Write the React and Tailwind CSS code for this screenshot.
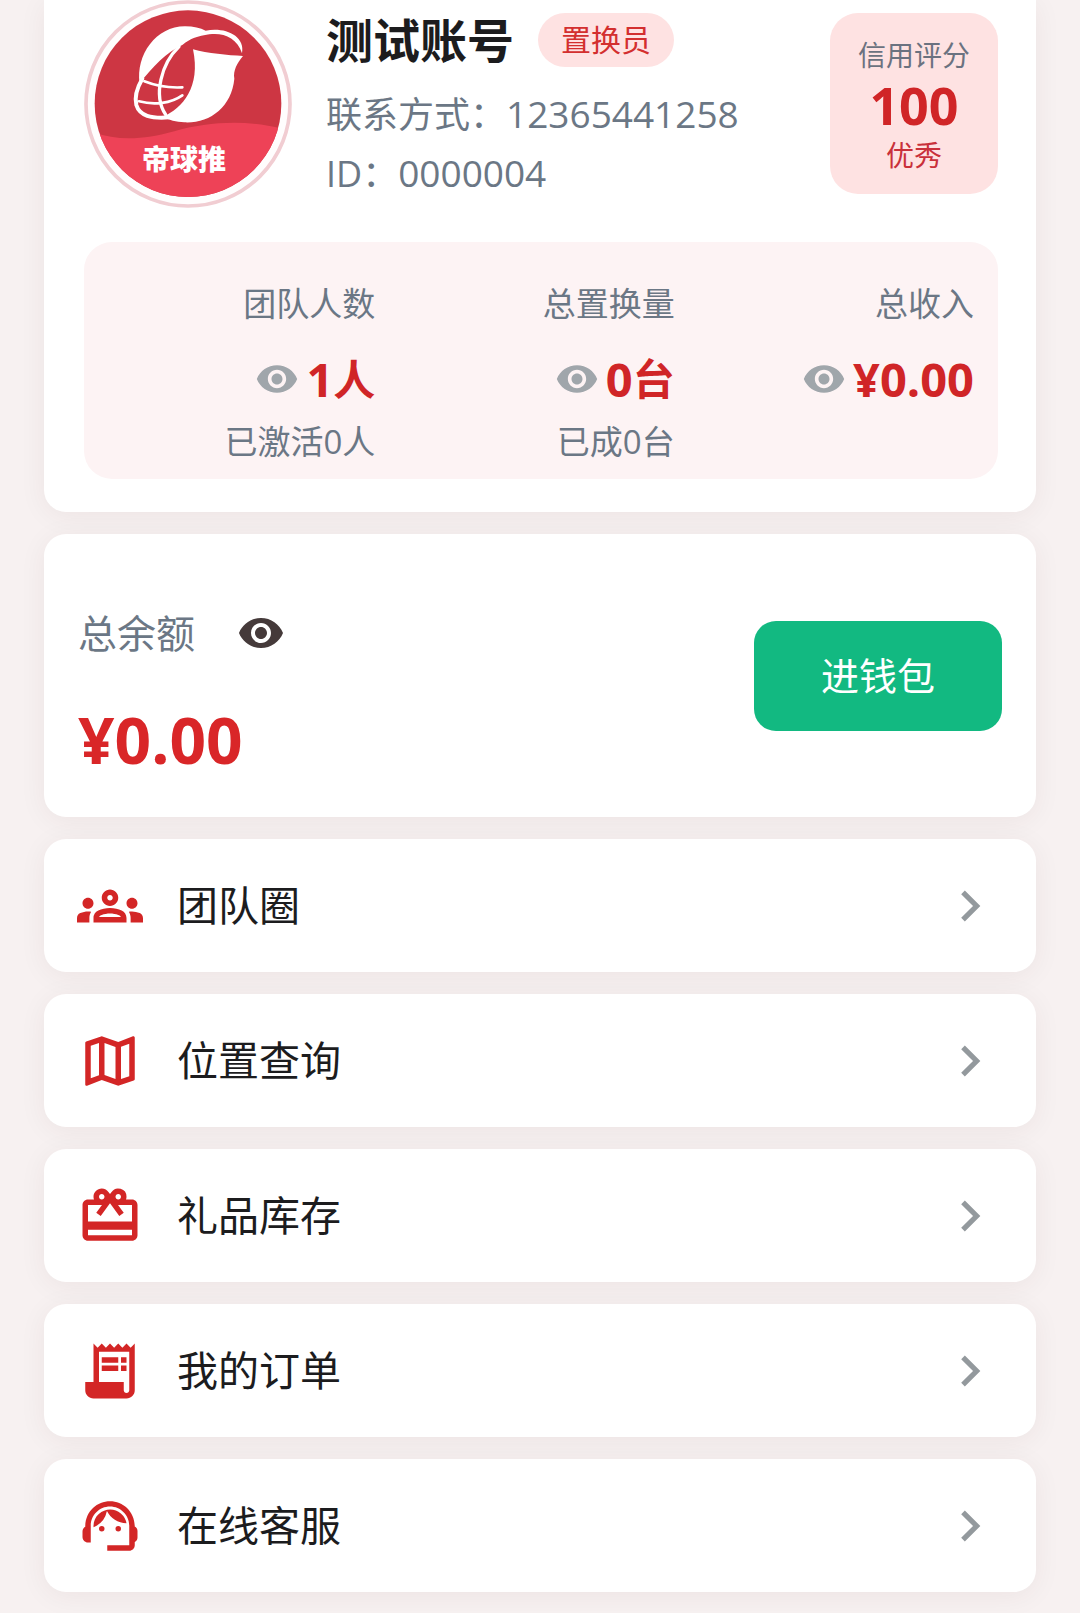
import React, { useState } from 'react';
import {
    MdChevronRight,
    MdOutlineGroups,
    MdOutlineMap,
    MdOutlineRedeem,
    MdReceiptLong,
    MdRemoveRedEye,
    MdSupportAgent,
} from 'react-icons/md';

const user = {
    name: '测试账号',
    role: '置换员',
    phone: '12365441258',
    id: '0000004',
    credit: 100,
    creditLabel: '优秀',
    balance: '¥0.00',
};

const stats = [
    { key: 'team', label: '团队人数', value: '1', unit: '人', sub: '已激活0人' },
    { key: 'swap', label: '总置换量', value: '0', unit: '台', sub: '已成0台' },
    { key: 'income', label: '总收入', value: '¥0.00', unit: '', sub: '' },
];

const menu = [
    { label: '团队圈', href: '#team', icon: MdOutlineGroups },
    { label: '位置查询', href: '#location', icon: MdOutlineMap },
    { label: '礼品库存', href: '#gifts', icon: MdOutlineRedeem },
    { label: '我的订单', href: '#orders', icon: MdReceiptLong },
    { label: '在线客服', href: '#support', icon: MdSupportAgent },
];

const Avatar = () => (
    <svg viewBox="129 0 624 624" className="size-[208px] shrink-0" role="img" aria-label="帝球推">
        <defs>
            <clipPath id="disc">
                <circle cx="441" cy="311" r="280" />
            </clipPath>
        </defs>
        <circle cx="441" cy="312" r="306" fill="#fffdfd" stroke="#f1cdd2" strokeWidth="11" />
        <g clipPath="url(#disc)">
            <rect x="129" width="624" height="624" fill="#cd3643" />
            <path d="M129 385C210 425 300 422 400 394C510 362 640 358 753 395V624H129Z" fill="#ee4257" />
        </g>
        {/* cap of the ball and its tail */}
        <path
            d="M296 250C284 165 345 79 432 79C458 79 478 84 494 92C548 80 614 105 603 160C588 112 545 97 505 103C470 108 448 116 425 134C375 158 335 200 296 250Z"
            fill="#fff"
        />
        <path
            d="M456 148C500 160 560 166 606 168C588 190 576 212 580 236C572 322 505 371 430 367C405 366 385 360 365 351C425 325 480 262 456 148Z"
            fill="#fff"
        />
        <g fill="none" stroke="#fff" strokeLinecap="round">
            <path d="M304 236C287 265 280 290 286 315C296 348 330 356 385 352" strokeWidth="12" />
            <path d="M414 140C362 190 335 285 374 344" strokeWidth="10" />
            <path d="M310 244C345 258 385 264 424 262" strokeWidth="8" />
            <path d="M294 304C340 316 390 310 424 286" strokeWidth="8" />
        </g>
        <text
            x="429"
            y="510"
            textAnchor="middle"
            fill="#fff"
            className="text-[84px] font-black"
        >
            帝球推
        </text>
    </svg>
);

const Card = ({ className, children }) => (
    <section className={`bg-white shadow-[0_4px_28px_rgba(60,0,0,0.06)] ${className}`}>
        {children}
    </section>
);

const App = () => {
    const [hidden, setHidden] = useState({});

    const toggle = (key) => setHidden({ ...hidden, [key]: !hidden[key] });

    return (
        <main className="min-h-screen bg-[#f7f1f1] px-11 pb-5 flex flex-col gap-[22px] font-['Open_Sans','Noto_Sans_CJK_SC',sans-serif] text-[#1c1c1e]">
            <Card className="rounded-b-[22px] pl-10 pr-[38px] pb-[33px]">
                <header className="flex items-start">
                    <Avatar />
                    <div className="ml-[34px] pt-[13px] flex-1">
                        <div className="flex items-center gap-6 h-[54px]">
                            <h1 className="text-[47px] leading-[54px] font-bold">{user.name}</h1>
                            <span className="h-[54px] px-[23px] rounded-full bg-[#fee2e2] text-[30px] leading-[54px] text-[#d32f2f]">
                                {user.role}
                            </span>
                        </div>
                        <div className="mt-[18px] text-[36px] leading-[58px] text-[#6b7785]">
                            <p>联系方式：<span className="text-[37px]">{user.phone}</span></p>
                            <p>ID：<span className="text-[37px]">{user.id}</span></p>
                        </div>
                    </div>
                    <div className="mt-[13px] w-[168px] pt-[17px] pb-[14px] rounded-[28px] bg-[#fee2e2] text-center text-[28px] leading-[50px]">
                        <p className="text-[#6b7280]">信用评分</p>
                        <p className="text-[52px] font-bold text-[#d02527]">{user.credit}</p>
                        <p className="text-[#c9303a]">{user.creditLabel}</p>
                    </div>
                </header>

                <div className="mt-[34px] pt-[38px] pb-[15px] pr-6 rounded-[28px] bg-[#fdf3f4] grid grid-cols-3 gap-2 text-right">
                    {stats.map(s => (
                        <div key={s.key} className="text-[33px] text-[#6b7785]">
                            <p className="leading-[48px]">{s.label}</p>
                            <div className="mt-[21px] h-[60px] flex items-center justify-end gap-[7px]">
                                <button type="button" aria-label={`显示或隐藏${s.label}`} onClick={() => toggle(s.key)}>
                                    <MdRemoveRedEye className="size-[44px] text-[#a0a6ab]" />
                                </button>
                                <p className="flex text-[47px] leading-[60px] font-bold text-[#d02527]">
                                    {hidden[s.key] ? '***' : s.value}
                                    <span className="text-[42px]">{s.unit}</span>
                                </p>
                            </div>
                            {s.sub && <p className="mt-[11px] leading-[44px]">{s.sub}</p>}
                        </div>
                    ))}
                </div>
            </Card>

            <Card className="rounded-[22px] px-[34px] py-[37px] flex items-center justify-between">
                <div className="pt-[34px]">
                    <div className="flex items-center gap-[42px]">
                        <p className="text-[39px] leading-[56px] text-[#6b7785]">总余额</p>
                        <button type="button" aria-label="显示或隐藏总余额" onClick={() => toggle('balance')}>
                            <MdRemoveRedEye className="size-[48px] text-[#453a3a]" />
                        </button>
                    </div>
                    <p className="mt-[39px] text-[64px] leading-[80px] font-bold text-[#d92628]">
                        {hidden.balance ? '***' : user.balance}
                    </p>
                </div>
                <button type="button" className="h-[110px] w-[248px] rounded-[22px] bg-[#12b981] text-[38px] text-white">
                    进钱包
                </button>
            </Card>

            <nav className="flex flex-col gap-[22px]">
                {menu.map(({ label, href, icon: Icon }) => (
                    <a
                        key={href}
                        href={href}
                        className="flex items-center pl-[33px] pr-[35px] py-[33px] rounded-[22px] bg-white shadow-[0_4px_28px_rgba(60,0,0,0.06)]"
                    >
                        <Icon className="size-[66px] text-[#d32626]" />
                        <span className="ml-[34px] flex-1 text-[41px] leading-[67px]">{label}</span>
                        <MdChevronRight className="size-[62px] text-[#93999d]" />
                    </a>
                ))}
            </nav>
        </main>
    );
};

export default App;
